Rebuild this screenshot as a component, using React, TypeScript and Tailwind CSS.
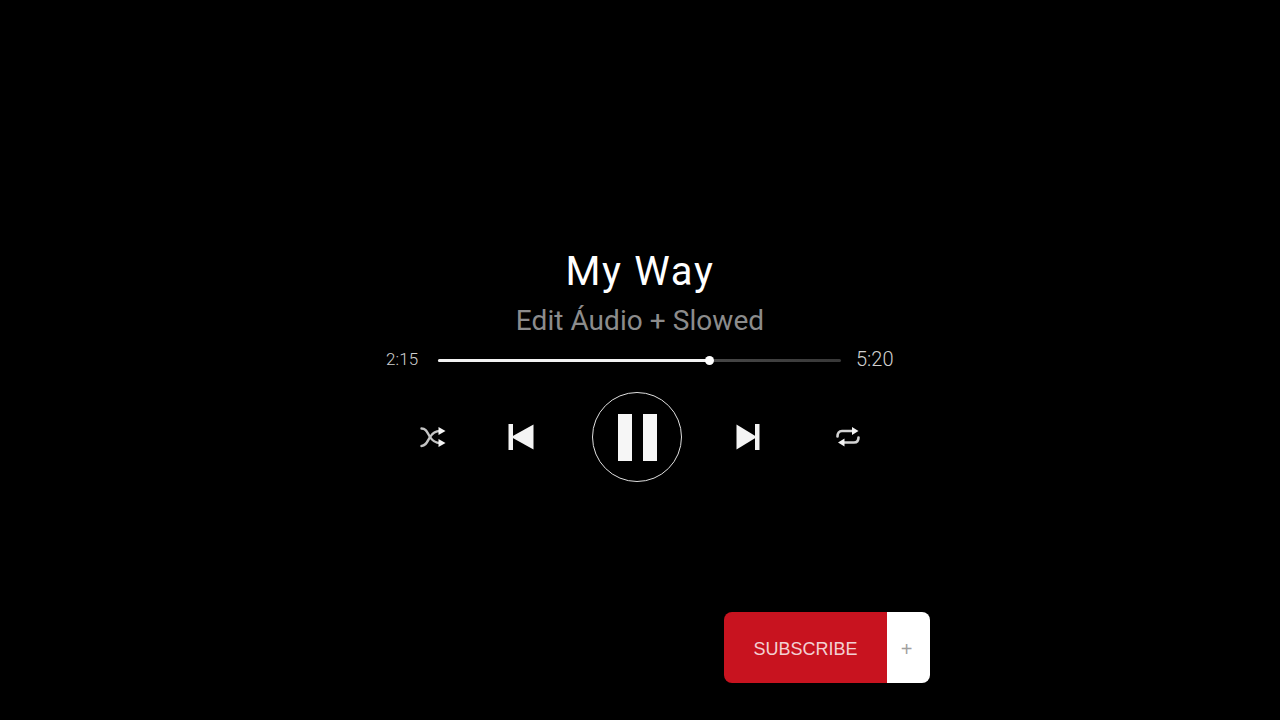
import { FC } from "react";

const ShuffleIcon: FC = () => (
	<svg className="blur-[0.4px]" width="26" height="22" viewBox="0 0 26 22" fill="none">
		<path d="M1.500 2.500C6 2.500 7 6 10 11C12.500 15 15 17 20 17" stroke="#c4c4c4" strokeWidth="2.400" strokeLinecap="round" />
		<path d="M1.500 20C6 20 7 16 10 11C12.500 7 15 5 20 5" stroke="#c4c4c4" strokeWidth="2.400" strokeLinecap="round" />
		<path d="M18.500 1l7 4-7 4zM18.500 13l7 4-7 4z" fill="#f4f4f4" />
	</svg>
);

const RepeatIcon: FC = () => (
	<svg className="blur-[0.4px]" width="26" height="22" viewBox="0 0 26 22" fill="none">
		<path d="M2.500 10.500C2.500 7 4 5 7 5H18" stroke="#d4d4d4" strokeWidth="2.600" strokeLinecap="round" />
		<path d="M23.500 11.500C23.500 15 22 16.500 19 16.500H8" stroke="#d4d4d4" strokeWidth="2.600" strokeLinecap="round" />
		<path d="M17 1l6.500 4-6.500 4zM9.500 12.500l-6.500 4 6.500 4z" fill="#f4f4f4" />
	</svg>
);

const PrevIcon: FC = () => (
	<svg className="blur-[0.4px]" width="26" height="28" viewBox="0 0 26 28" fill="#f4f4f4">
		<rect x="0.500" y="1" width="4.500" height="26" />
		<path d="M25.500 1.500v25L3 14z" />
	</svg>
);

const NextIcon: FC = () => (
	<svg className="blur-[0.4px]" width="24" height="28" viewBox="0 0 24 28" fill="#f4f4f4">
		<rect x="19" y="1" width="4.500" height="26" />
		<path d="M0.500 1.500v25L21 14z" />
	</svg>
);

const App: FC = () => {
	return (
		<div className="flex h-[720px] w-[1280px] flex-col overflow-hidden bg-black font-['Roboto',sans-serif]">
			<h1 className="mt-[249px] h-[46px] text-center text-[40px] leading-[46px] tracking-[1.700px] text-white">
				My Way
			</h1>
			<p className="mt-[9px] h-[34px] text-center text-[28px] leading-[34px] tracking-[0.050px] text-[#8c8c8c]">
				Edit Áudio + Slowed
			</p>

			<div className="mt-[10px] flex h-[24px] items-center pl-[386px] font-light text-[#d0d0d0]">
				<span className="w-[52px] text-[17px] tracking-[0.100px]">2:15</span>
				<div className="relative h-[3px] w-[403px] rounded-full bg-gradient-to-r from-[#666666] to-[#383838]">
					<div className="h-full w-[271px] rounded-full bg-[#f2f2f2]" />
					<div className="absolute left-[267px] top-[-3px] h-[9px] w-[9px] rounded-full bg-white" />
				</div>
				<span className="ml-[15px] pb-[3px] text-[20px]">5:20</span>
			</div>

			<div className="mt-[20px] flex h-[90px] items-center pl-[420px]">
				<ShuffleIcon />
				<div className="ml-[62px]">
					<PrevIcon />
				</div>
				<div className="ml-[58px] flex h-[90px] w-[90px] items-center justify-center gap-[11px] rounded-full border border-[#e0e0e0]">
					<div className="h-[47px] w-[14px] bg-[#f6f6f6]" />
					<div className="h-[47px] w-[14px] bg-[#f6f6f6]" />
				</div>
				<div className="ml-[54px]">
					<NextIcon />
				</div>
				<div className="ml-[75px]">
					<RepeatIcon />
				</div>
			</div>

			<div className="ml-[724px] mt-[130px] flex h-[71px] w-[206px] overflow-hidden rounded-[8px] font-['Liberation_Sans',sans-serif]">
				<div className="flex w-[163px] items-center justify-center bg-[#c8131f] pt-[3px] text-[18px] text-[#f3d0d3]">
					SUBSCRIBE
				</div>
				<div className="flex flex-1 items-center justify-center bg-white pr-[4px] pt-[2px] text-[20px] text-[#a0a0a0]">
					+
				</div>
			</div>
		</div>
	);
};

export default App;
